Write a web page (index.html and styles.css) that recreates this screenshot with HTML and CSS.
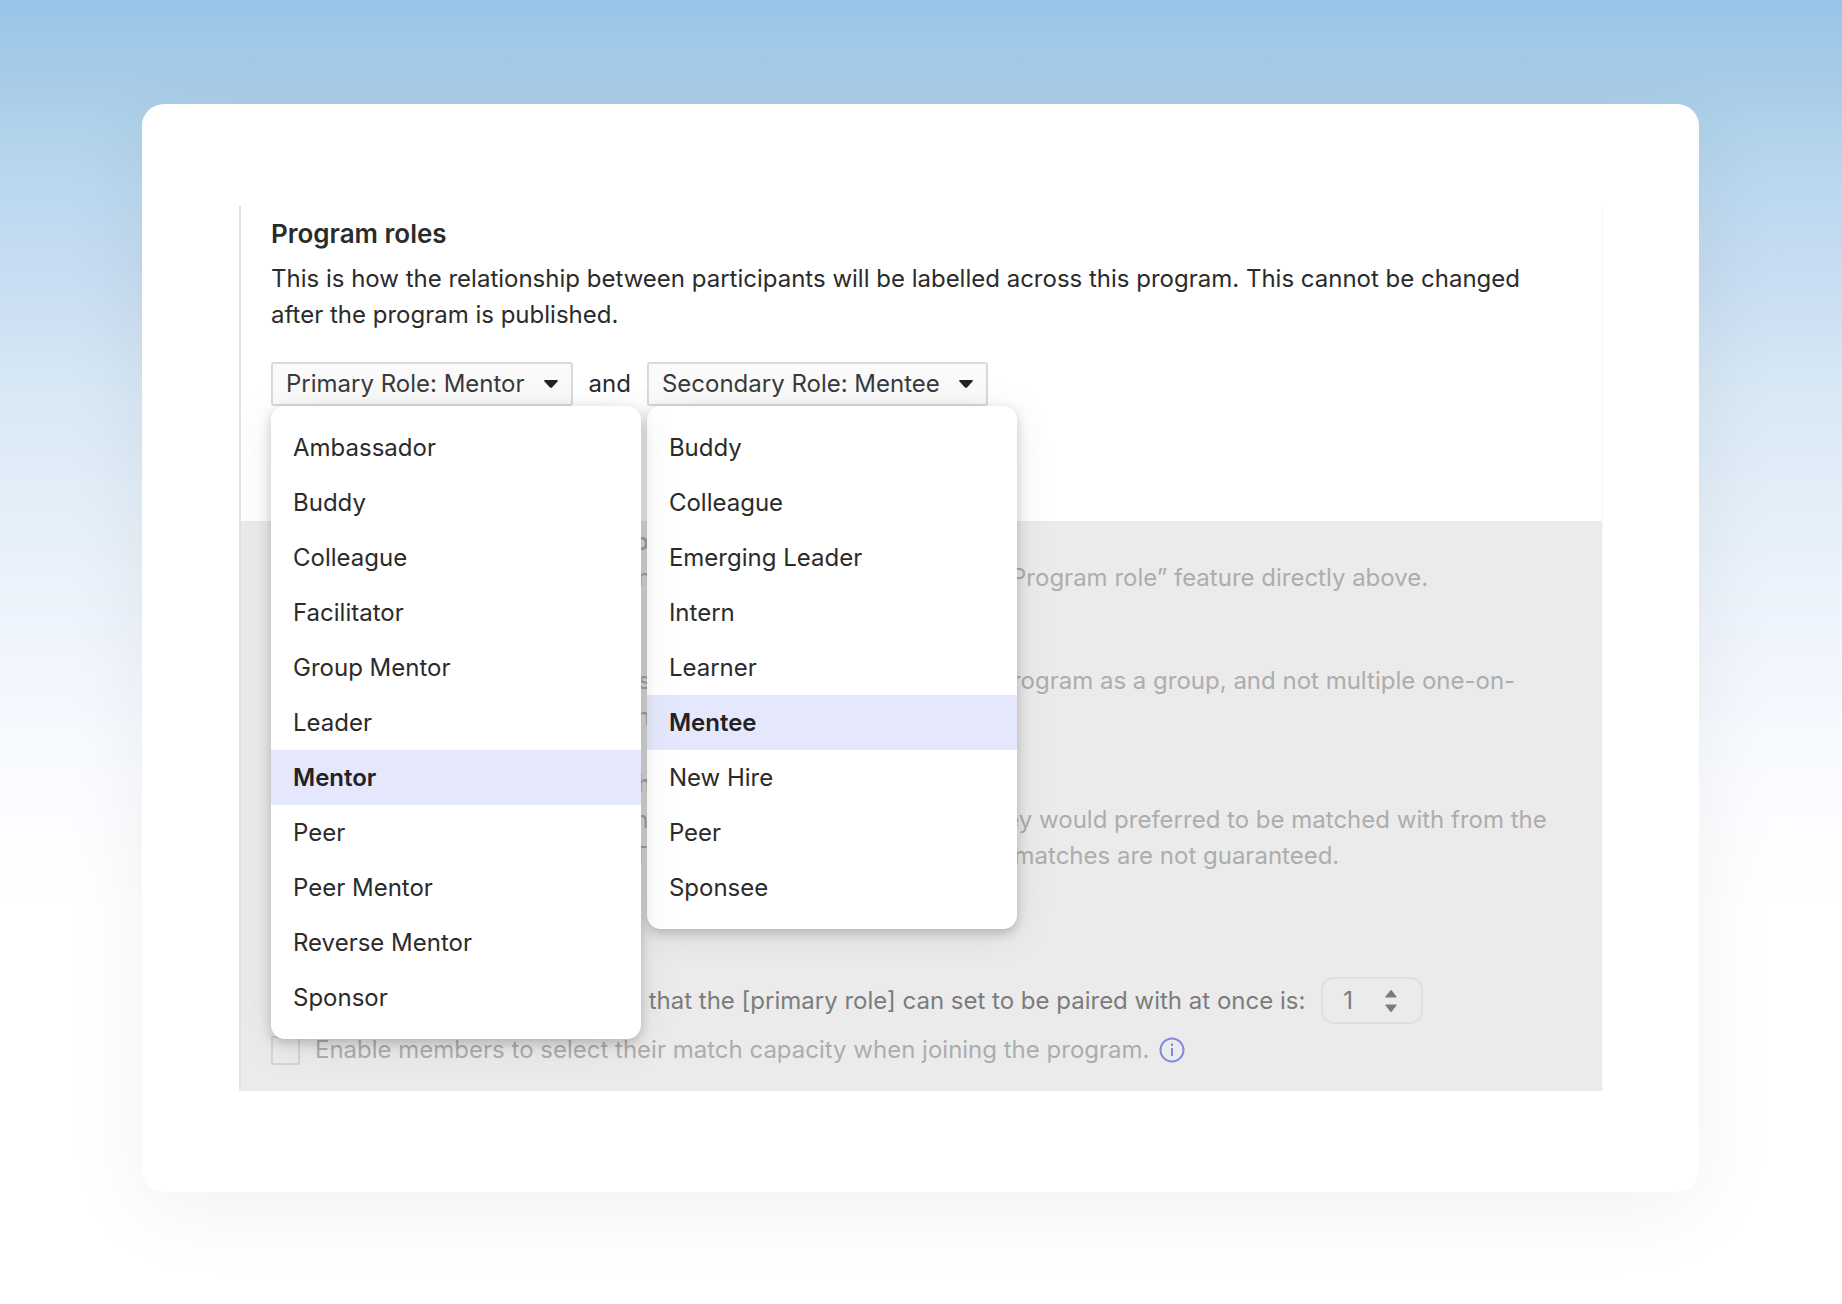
FILE: index.html
```html
<!DOCTYPE html>
<html lang="en">

<head>
    <meta charset="UTF-8" />
    <meta name="viewport" content="width=device-width, initial-scale=1.0" />
    <title>Program roles</title>
    <link rel="stylesheet" href="styles.css">
</head>

<body>
    <main class="card">
        <div class="panel">
            <section class="roles">
                <h2>Program roles</h2>
                <p>This is how the relationship between participants will be labelled across this program. This cannot be changed after the program is published.</p>

                <div class="pickers">
                    <div class="picker primary">
                        <button type="button" class="picker-button" aria-haspopup="listbox" aria-expanded="true" aria-controls="primary-menu">
                            Primary Role: Mentor
                            <svg class="caret" viewBox="0 0 14 8" aria-hidden="true"><path d="M1 0h12q1.500.3.500 1.400L8 7.400q-1 .9-2 0L.5 1.400Q-.5.3 1 0z" /></svg>
                        </button>
                        <ul class="menu" id="primary-menu" role="listbox" aria-label="Primary role">
                            <li role="option">Ambassador</li>
                            <li role="option">Buddy</li>
                            <li role="option">Colleague</li>
                            <li role="option">Facilitator</li>
                            <li role="option">Group Mentor</li>
                            <li role="option">Leader</li>
                            <li role="option" class="selected" aria-selected="true">Mentor</li>
                            <li role="option">Peer</li>
                            <li role="option">Peer Mentor</li>
                            <li role="option">Reverse Mentor</li>
                            <li role="option">Sponsor</li>
                        </ul>
                    </div>
                    <span>and</span>
                    <div class="picker">
                        <button type="button" class="picker-button" aria-haspopup="listbox" aria-expanded="true" aria-controls="secondary-menu">
                            Secondary Role: Mentee
                            <svg class="caret" viewBox="0 0 14 8" aria-hidden="true"><path d="M1 0h12q1.500.3.500 1.400L8 7.400q-1 .9-2 0L.5 1.400Q-.5.3 1 0z" /></svg>
                        </button>
                        <ul class="menu" id="secondary-menu" role="listbox" aria-label="Secondary role">
                            <li role="option">Buddy</li>
                            <li role="option">Colleague</li>
                            <li role="option">Emerging Leader</li>
                            <li role="option">Intern</li>
                            <li role="option">Learner</li>
                            <li role="option" class="selected" aria-selected="true">Mentee</li>
                            <li role="option">New Hire</li>
                            <li role="option">Peer</li>
                            <li role="option">Sponsee</li>
                        </ul>
                    </div>
                </div>
            </section>

            <section class="settings">
                <div class="setting">
                    <h3>Allow members to join as both roles</h3>
                    <p>Members can join in both of the main roles that are set up in the “Program role” feature directly above.</p>
                </div>
                <div class="setting">
                    <h3>Enable group matching</h3>
                    <p>Group programs are for members who currently take part in the program as a group, and not multiple one-on-one matches that are set up by the admin.</p>
                </div>
                <div class="setting">
                    <h3>Let members choose their match</h3>
                    <p>Members who join can then let the program admins know who they would preferred to be matched with from the list of members in the program. This is only a request but chosen matches are not guaranteed.</p>
                </div>
                <div class="setting">
                    <h3>Match capacity</h3>
                    <div class="capacity">
                        <label for="capacity">The highest number of members that the [primary role] can set to be paired with at once is:</label>
                        <div class="stepper">
                            <input type="text" inputmode="numeric" id="capacity" value="1" />
                            <svg viewBox="0 0 12 24" aria-hidden="true"><path d="M5.200 1.500q.8-1 1.600 0L11.500 7.500q.4 1-.5 1H1q-.9 0-.5-1zM5.200 22.500q.8 1 1.600 0L11.500 16.500q.4-1-.5-1H1q-.9 0-.5 1z" /></svg>
                        </div>
                    </div>
                    <div class="enable">
                        <input type="checkbox" id="enable" />
                        <label for="enable">Enable members to select their match capacity when joining the program.</label>
                        <svg class="info" viewBox="0 0 26 26" aria-hidden="true"><circle cx="13" cy="13" r="11.500" /><path d="M13 11v8M13 6.500v2.500" /></svg>
                    </div>
                </div>
            </section>
        </div>
    </main>
</body>

</html>
```

FILE: styles.css
```css
* {
    box-sizing: border-box;
}

body {
    margin: 0;
    min-height: 100vh;
    padding: 104px 143px 112px 142px;
    background: linear-gradient(#98c4e9 0, #a8cce7 80px, #b9d8ef 180px, #c6dcf1 265px, #d8e8f5 390px, #e6f0f9 530px, #f0f5fd 640px, #fafcff 780px, #ffffff 900px) no-repeat white;
    font-family: Inter, sans-serif;
    font-size: 24px;
    line-height: 36px;
    color: #2b2b2b;
}

h2,
h3,
p,
ul {
    margin: 0;
    padding: 0;
}

h2,
h3 {
    font-weight: 600;
}

.card {
    padding: 102px 96px 101px 97px;
    background-color: white;
    border-radius: 22px;
    box-shadow: 0 16px 90px rgba(0, 0, 0, 0.06);
}

.panel {
    border-left: 2px solid #e3e3e3;
    border-right: 1px solid #f8f8f8;
}

.roles {
    height: 315px;
    padding: 10px 47px 0 30px;
}

.roles h2 {
    margin-bottom: 9px;
    font-size: 26px;
}

.pickers {
    display: flex;
    align-items: center;
    gap: 16px;
    margin-top: 29px;
}

.picker {
    position: relative;
}

.primary {
    z-index: 1;
}

.picker-button {
    display: flex;
    align-items: center;
    gap: 19px;
    padding: 2px 13px;
    background-color: #fafafa;
    border: 2px solid #dadada;
    border-radius: 3px;
    color: #3a3a3a;
    font: inherit;
}

.caret {
    width: 14px;
    height: 8px;
    fill: #222222;
}

/* open menus float over the settings below */
.menu {
    position: absolute;
    top: 100%;
    left: 0;
    width: 370px;
    padding: 14px 0;
    background-color: white;
    border-radius: 14px;
    box-shadow: 0 4px 12px rgba(0, 0, 0, 0.2), 0 6px 40px rgba(0, 0, 0, 0.08);
    list-style: none;
}

.menu li {
    padding: 0 22px;
    line-height: 55px;
}

.menu .selected {
    background-color: #e5e7fd;
    color: #222222;
    font-weight: 600;
}

.settings {
    display: flex;
    flex-direction: column;
    gap: 29px;
    padding: 3px 47px 23px 30px;
    background-color: #ebebeb;
    color: #adadad;
}

.setting h3 {
    font-size: 24px;
}

.setting p {
    margin-bottom: 2px;
}

.capacity {
    display: flex;
    align-items: center;
    gap: 16px;
    margin-top: 36px;
    color: #7c7c7c;
}

.stepper {
    display: flex;
    align-items: center;
    justify-content: space-between;
    width: 102px;
    height: 47px;
    padding: 0 24px 0 20px;
    border: 2px solid #dfdfdf;
    border-radius: 13px;
}

.stepper input {
    width: 24px;
    padding: 0;
    border: 0;
    background: transparent;
    color: inherit;
    font: inherit;
}

.stepper svg {
    width: 12px;
    height: 24px;
    fill: #7c7c7c;
}

.enable {
    display: flex;
    align-items: center;
    margin-top: 8px;
}

.enable input {
    appearance: none;
    width: 29px;
    height: 29px;
    margin: 0 15px 0 0;
    border: 2px solid #d4d4d4;
    border-radius: 2px;
}

.info {
    width: 26px;
    height: 26px;
    margin-left: 10px;
    fill: none;
    stroke: #8189e4;
    stroke-width: 2;
}
```
